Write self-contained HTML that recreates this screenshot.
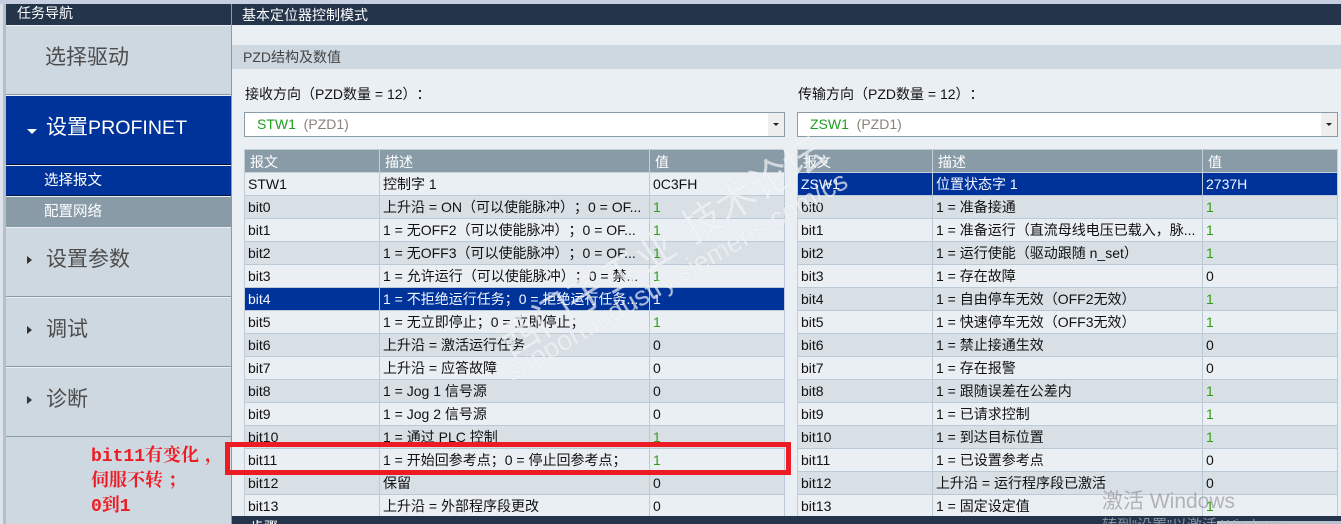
<!DOCTYPE html>
<html lang="zh">
<head>
<meta charset="utf-8">
<title>基本定位器控制模式</title>
<style>
html{margin:0;padding:0;width:1341px;height:524px;overflow:hidden;}
body{margin:0;padding:0;position:relative;width:1341px;height:524px;overflow:hidden;background:#eaeff4;font-family:"Liberation Sans","Noto Sans CJK SC",sans-serif;font-size:14px;color:#111;text-spacing-trim:space-all;}
.a{position:absolute;white-space:nowrap;}
.nav{position:absolute;left:6px;width:225px;background:#cdd8e0;box-sizing:border-box;}
.navt{position:absolute;left:40px;font-size:21px;color:#4d4d4d;white-space:nowrap;line-height:26px;}
.tri{position:absolute;left:21px;width:0;height:0;border-top:4.5px solid transparent;border-bottom:4.5px solid transparent;border-left:5px solid #333;}
table{position:absolute;top:149px;border-collapse:separate;border-spacing:0;table-layout:fixed;width:541px;background:#c1cdd9;padding:1px 0 0 1px;box-sizing:border-box;}
td,th{height:23px;padding:0 0 0 3px;box-sizing:border-box;font-weight:normal;text-align:left;border-right:1px solid #bccad7;border-bottom:1px solid #bccad7;white-space:nowrap;overflow:hidden;line-height:20px;background:#eaeff4;font-size:14px;}
th{background:#8a9ba8;color:#fff;padding:2px 0 0 5px;font-size:14px;border-color:#c5d0da;line-height:20px;}
tr{height:23px;}
tr.d td{background:#d8e0e6;}
tr.s td{background:#00339a;color:#f2f6ff;}
td.g{color:#2f9e14;}
.sel{position:absolute;top:112px;height:25px;width:541px;box-sizing:border-box;background:#fff;border:1px solid #8a9ba8;line-height:23px;padding-left:12px;font-size:14px;color:#8a8478;white-space:nowrap;}
.sel b{font-weight:normal;color:#1e9e22;}
.sel i{position:absolute;right:0;top:0;width:16px;height:23px;background:#eeeeee;}
.sel i:after{content:"";position:absolute;left:5px;top:10px;border-left:3px solid transparent;border-right:3px solid transparent;border-top:3px solid #222;}
.wm{position:absolute;transform-origin:0 100%;color:rgba(255,255,255,.62);white-space:nowrap;text-shadow:0 0 1px rgba(150,165,180,.25);}
</style>
</head>
<body>
<div class="a" style="left:0;top:0;width:1341px;height:4px;background:#c6cfe0;"></div>
<div class="a" style="left:0;top:4px;width:3px;height:520px;background:#dde3ec;"></div>
<div class="a" style="left:3px;top:4px;width:3px;height:520px;background:#b4bfca;"></div>

<!-- sidebar -->
<div class="a" style="left:6px;top:4px;width:225px;height:21px;background:#24344b;color:#fff;font-size:14px;line-height:19px;padding-left:11px;box-sizing:border-box;">任务导航</div>
<div class="a" style="left:231px;top:4px;width:1px;height:520px;background:#8a9ba8;"></div>
<div class="nav" style="top:26px;height:69px;border-bottom:1px solid #8a9ba8;"><div class="navt" style="left:39px;top:19px;">选择驱动</div></div>
<div class="nav" style="top:96px;height:69px;background:#00339a;"><div class="a" style="left:21px;top:33px;border-left:5px solid transparent;border-right:5px solid transparent;border-top:5px solid #fff;"></div><div class="navt" style="left:40px;top:19px;color:#fff;">设置<span style="font-size:19.6px;">PROFINET</span></div></div>
<div class="a" style="left:6px;top:164px;width:225px;height:1px;background:#000c3a;"></div>
<div class="nav" style="top:166px;height:30px;background:#00339a;color:#fff;border-bottom:1px solid #00184a;"><div class="a" style="left:38px;top:5px;line-height:20px;font-size:14.5px;">选择报文</div></div>
<div class="nav" style="top:197px;height:30px;background:#8a9ba8;color:#fff;"><div class="a" style="left:38px;top:5px;line-height:20px;font-size:14.5px;">配置网络</div></div>
<div class="nav" style="top:228px;height:69px;border-bottom:1px solid #8a9ba8;"><div class="tri" style="top:28px;"></div><div class="navt" style="left:40px;top:19px;">设置参数</div></div>
<div class="nav" style="top:298px;height:69px;border-bottom:1px solid #8a9ba8;"><div class="tri" style="top:28px;"></div><div class="navt" style="left:40px;top:19px;">调试</div></div>
<div class="nav" style="top:368px;height:69px;border-bottom:1px solid #8a9ba8;"><div class="tri" style="top:28px;"></div><div class="navt" style="left:40px;top:19px;">诊断</div></div>
<div class="nav" style="top:437px;height:87px;"></div>

<!-- main -->
<div class="a" style="left:232px;top:4px;width:1109px;height:21px;background:#24344b;color:#fff;font-size:14px;line-height:22px;padding-left:10px;box-sizing:border-box;">基本定位器控制模式</div>
<div class="a" style="left:232px;top:45px;width:1109px;height:24px;background:#cdd8e0;color:#444;font-size:14px;line-height:24px;padding-left:11px;box-sizing:border-box;">PZD结构及数值</div>
<div class="a" style="left:245px;top:85px;line-height:18px;">接收方向（PZD数量 = 12）：</div>
<div class="a" style="left:798px;top:85px;line-height:18px;">传输方向（PZD数量 = 12）：</div>
<div class="sel" style="left:244px;"><b>STW1</b>&nbsp; (PZD1)<i></i></div>
<div class="sel" style="left:797px;"><b>ZSW1</b>&nbsp; (PZD1)<i></i></div>

<table style="left:244px;">
<colgroup><col style="width:135px"><col style="width:270px"><col style="width:135px"></colgroup>
<tr><th>报文</th><th>描述</th><th>值</th></tr>
<tr><td>STW1</td><td>控制字 1</td><td>0C3FH</td></tr>
<tr class="d"><td>bit0</td><td>上升沿 = ON（可以使能脉冲）；0 = OF...</td><td class="g">1</td></tr>
<tr><td>bit1</td><td>1 = 无OFF2（可以使能脉冲）；0 = OF...</td><td class="g">1</td></tr>
<tr class="d"><td>bit2</td><td>1 = 无OFF3（可以使能脉冲）；0 = OF...</td><td class="g">1</td></tr>
<tr><td>bit3</td><td>1 = 允许运行（可以使能脉冲）；0 = 禁...</td><td class="g">1</td></tr>
<tr class="s"><td>bit4</td><td>1 = 不拒绝运行任务；0 = 拒绝运行任务...</td><td>1</td></tr>
<tr><td>bit5</td><td>1 = 无立即停止；0 = 立即停止；</td><td class="g">1</td></tr>
<tr class="d"><td>bit6</td><td>上升沿 = 激活运行任务</td><td>0</td></tr>
<tr><td>bit7</td><td>上升沿 = 应答故障</td><td>0</td></tr>
<tr class="d"><td>bit8</td><td>1 = Jog 1 信号源</td><td>0</td></tr>
<tr><td>bit9</td><td>1 = Jog 2 信号源</td><td>0</td></tr>
<tr class="d"><td>bit10</td><td>1 = 通过 PLC 控制</td><td class="g">1</td></tr>
<tr><td>bit11</td><td>1 = 开始回参考点；0 = 停止回参考点；</td><td class="g">1</td></tr>
<tr class="d"><td>bit12</td><td>保留</td><td>0</td></tr>
<tr><td>bit13</td><td>上升沿 = 外部程序段更改</td><td>0</td></tr>
</table>

<table style="left:797px;">
<colgroup><col style="width:135px"><col style="width:270px"><col style="width:135px"></colgroup>
<tr><th>报文</th><th>描述</th><th>值</th></tr>
<tr class="s"><td>ZSW1</td><td>位置状态字 1</td><td>2737H</td></tr>
<tr class="d"><td>bit0</td><td>1 = 准备接通</td><td class="g">1</td></tr>
<tr><td>bit1</td><td>1 = 准备运行（直流母线电压已载入，脉...</td><td class="g">1</td></tr>
<tr class="d"><td>bit2</td><td>1 = 运行使能（驱动跟随 n_set）</td><td class="g">1</td></tr>
<tr><td>bit3</td><td>1 = 存在故障</td><td>0</td></tr>
<tr class="d"><td>bit4</td><td>1 = 自由停车无效（OFF2无效）</td><td class="g">1</td></tr>
<tr><td>bit5</td><td>1 = 快速停车无效（OFF3无效）</td><td class="g">1</td></tr>
<tr class="d"><td>bit6</td><td>1 = 禁止接通生效</td><td>0</td></tr>
<tr><td>bit7</td><td>1 = 存在报警</td><td>0</td></tr>
<tr class="d"><td>bit8</td><td>1 = 跟随误差在公差内</td><td class="g">1</td></tr>
<tr><td>bit9</td><td>1 = 已请求控制</td><td class="g">1</td></tr>
<tr class="d"><td>bit10</td><td>1 = 到达目标位置</td><td class="g">1</td></tr>
<tr><td>bit11</td><td>1 = 已设置参考点</td><td>0</td></tr>
<tr class="d"><td>bit12</td><td>上升沿 = 运行程序段已激活</td><td>0</td></tr>
<tr><td>bit13</td><td>1 = 固定设定值</td><td class="g">1</td></tr>
</table>

<!-- bottom bar -->
<div class="a" style="left:232px;top:516px;width:1109px;height:8px;background:#24344b;overflow:hidden;"><div class="a" style="left:18px;top:1px;color:#fff;font-size:14px;line-height:20px;">步骤</div></div>
<div class="a" style="left:1217px;top:521px;width:124px;height:3px;background:#b9c2cc;"></div>

<!-- watermark -->
<div class="wm" style="left:515px;top:321px;font-size:40px;line-height:46px;transform:rotate(-32deg);">西门子工业<span style="margin-left:16px;">技术论坛</span></div>
<div class="wm" style="left:514px;top:357px;font-size:27px;line-height:30px;transform:rotate(-30deg);">support.industry.siemens.com/cs</div>

<!-- red annotation -->
<div class="a" style="left:225px;top:442px;width:566px;height:33px;box-sizing:border-box;border:5px solid #ed1c24;"></div>
<div class="a" style="left:91px;top:445px;color:#ed1c24;font-family:'Liberation Mono','Noto Serif CJK SC',serif;font-weight:bold;font-size:18px;line-height:25px;white-space:nowrap;">bit11有变化<span style="margin-left:6px;">，</span><br>伺服不转<span style="margin-left:5px;">；</span><br>0到1</div>

<!-- activation text -->
<div class="a" style="left:1102px;top:489px;color:rgba(120,120,120,.5);font-size:21px;line-height:26px;">激活 Windows</div>
<div class="a" style="left:1102px;top:517px;color:rgba(170,178,190,.75);font-size:15px;line-height:18px;">转到“设置”以激活 Windows。</div>
</body>
</html>
